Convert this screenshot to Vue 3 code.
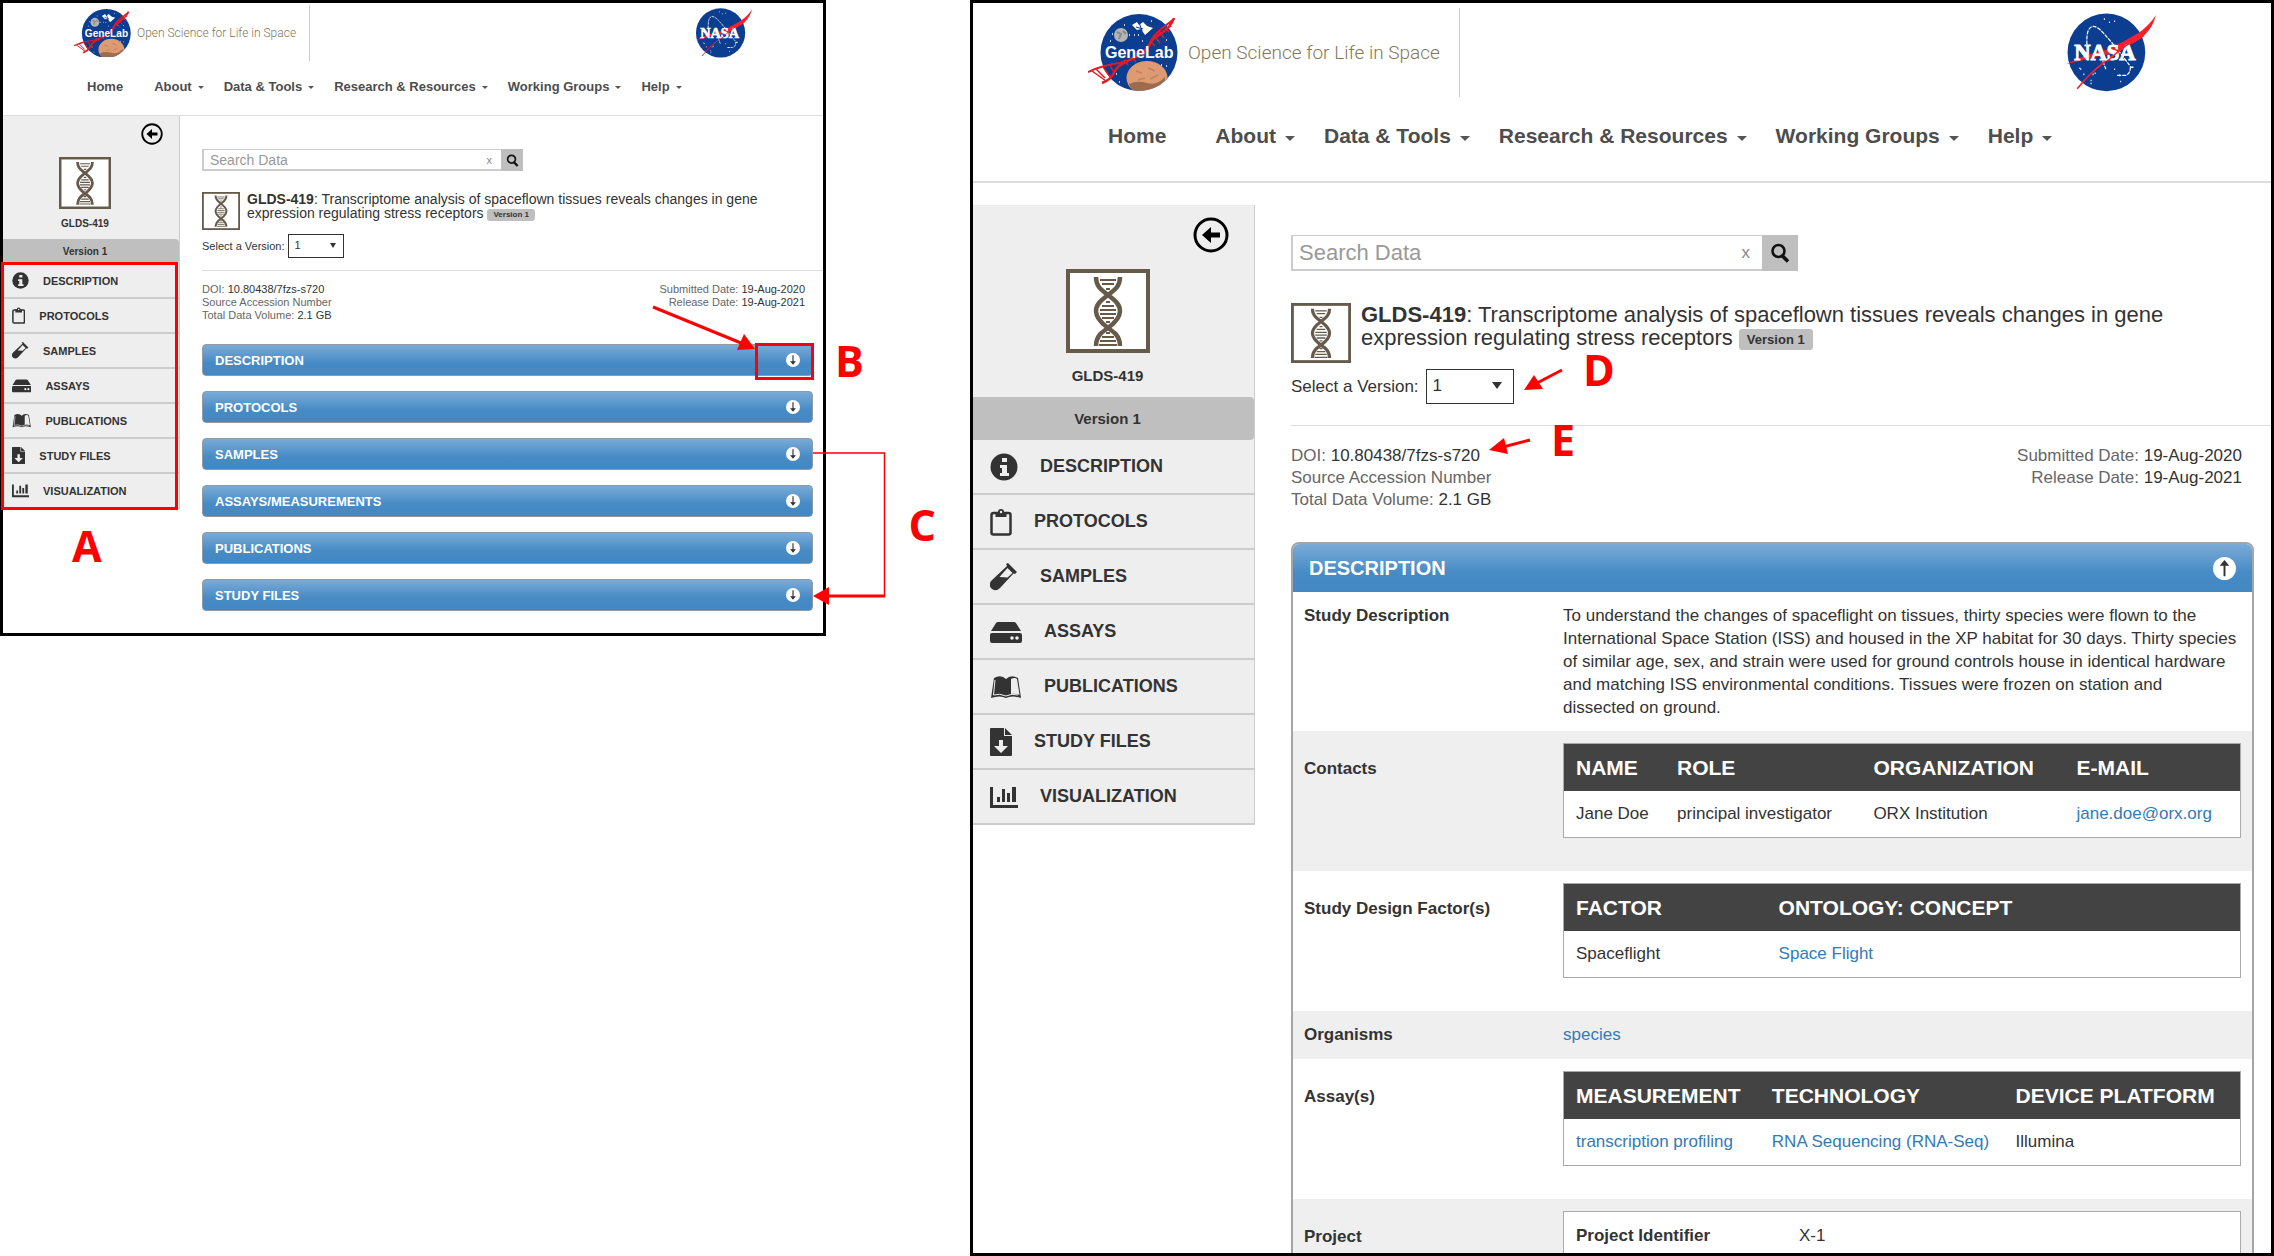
<script setup>
import { ref } from 'vue'

const views = ['compact', 'detail']
const menus = ['Home', 'About', 'Data & Tools', 'Research & Resources', 'Working Groups', 'Help']
const version = ref('1')
const query = ref('')

const sideLinks = [
  { label: 'DESCRIPTION', icon: 'info', w: 28, h: 28 },
  { label: 'PROTOCOLS', icon: 'clipboard', w: 22, h: 28 },
  { label: 'SAMPLES', icon: 'vial', w: 28, h: 28 },
  { label: 'ASSAYS', icon: 'drive', w: 32, h: 28 },
  { label: 'PUBLICATIONS', icon: 'book', w: 32, h: 28 },
  { label: 'STUDY FILES', icon: 'file', w: 22, h: 28 },
  { label: 'VISUALIZATION', icon: 'chart', w: 28, h: 28 },
]

const sections = ['DESCRIPTION', 'PROTOCOLS', 'SAMPLES', 'ASSAYS/MEASUREMENTS', 'PUBLICATIONS', 'STUDY FILES']

const summary = `To understand the changes of spaceflight on tissues, thirty species were flown to the
International Space Station (ISS) and housed in the XP habitat for 30 days. Thirty species
of similar age, sex, and strain were used for ground controls house in identical hardware
and matching ISS environmental conditions. Tissues were frozen on station and
dissected on ground.`

const rows = [
  { label: 'Study Description', text: summary },
  {
    label: 'Contacts',
    kind: 'contacts',
    head: ['NAME', 'ROLE', 'ORGANIZATION', 'E-MAIL'],
    cells: [{ t: 'Jane Doe' }, { t: 'principal investigator' }, { t: 'ORX Institution' }, { t: 'jane.doe@orx.org', link: true }],
  },
  {
    label: 'Study Design Factor(s)',
    kind: 'factors',
    head: ['FACTOR', 'ONTOLOGY: CONCEPT'],
    cells: [{ t: 'Spaceflight' }, { t: 'Space Flight', link: true }],
  },
  { label: 'Organisms', link: 'species' },
  {
    label: 'Assay(s)',
    kind: 'assays',
    head: ['MEASUREMENT', 'TECHNOLOGY', 'DEVICE PLATFORM'],
    cells: [{ t: 'transcription profiling', link: true }, { t: 'RNA Sequencing (RNA-Seq)', link: true }, { t: 'Illumina' }],
  },
  { label: 'Project', kind: 'project', cells: [{ t: 'Project Identifier', strong: true }, { t: 'X-1' }] },
]
</script>

<template>
  <div class="board">
    <article v-for="view in views" :key="view" class="panel" :class="view">
      <header class="site-header">
        <div class="brand-row">
          <a class="brand" href="#">
            <svg class="genelab" viewBox="0 0 90 77" role="img" aria-label="GeneLab">
              <defs>
                <clipPath :id="view + '-disc'"><circle cx="51" cy="38.5" r="38.5" /></clipPath>
              </defs>
              <circle cx="51" cy="38.5" r="38.5" fill="#0b3d91" />
              <g :clip-path="`url(#${view}-disc)`">
                <ellipse cx="59" cy="64" rx="20.5" ry="17" fill="#dd9a73" />
                <path d="M41 70q8-4 18-1t18-6v10q-8 7-18 7t-16-5z" fill="#9c6c4d" />
                <path d="M48 57l6 2M60 54l7 3M50 66l7-2M62 65l8-4" stroke="#c08560" stroke-width="1.5" />
              </g>
              <circle cx="33" cy="21" r="7" fill="#b4b4b4" />
              <path d="M29 18l4 2-2 5M35 17l3 3" stroke="#8b8b8b" stroke-width="2" fill="none" />
              <path d="M44 11l5-3 2 3 4-3 4 4 6 2-8 7-4-6-4 1z" fill="#fff" />
              <path d="M48 13l7 2M51 8l3 9" stroke="#0b3d91" stroke-width="1" />
              <path d="M41 21h1m4 0h1m3 0h1m3 6h1M22 27h1m46-1h1m8 0h1M24 20h1m11-9h1m36 40h1m4 1h1M28 60h1m2 8h1M63 7h1" stroke="#fff" stroke-width="1.5" />
              <g fill="none" stroke="#e31b23">
                <path d="M86 4C82 18 66 20 61 31C53 46 32 46 27 57Q23 66 14 69" stroke-width="2.5" />
                <path d="M86 5C80 10 76 12 70 18Q63 24 62 31C52 43 42 47 32 49Q15 51 0 58" stroke-width="2" />
                <path d="M66 21l6 8M71 17l5 7M76 12l5 6M62 27l5 5M81 9l2 4M43 43l5 5M36 46l4 5M22 51l4 8M15 53l8 11M8 55l9 9M4 57l14 10" stroke-width="1.5" />
              </g>
              <text x="17" y="44" class="genelab-word">GeneLab</text>
            </svg>
            <span class="tagline">Open Science for Life in Space</span>
          </a>
          <svg class="nasa" viewBox="0 0 88 77" role="img" aria-label="NASA">
            <circle cx="39.5" cy="38.5" r="38" fill="#0b3d91" />
            <path d="M21 36C18 12 26 8 36 19Q48 32 62 51M36 47l3 8M50 61h8q5-1 5-9" fill="none" stroke="#fff" stroke-width="1.2" stroke-dasharray="4 1" />
            <path d="M37 6h1m4 3h1m4-1h1M24 66h1m-1 3h1M14 55h1m2 5h1m10-1h1m18-4h1m4 6h1m0 6h1m9-14h3M13 54h1m12 6h1" stroke="#fff" stroke-width="1.5" />
            <path d="M88 2C84 18 73 28 57 33L47 39 29 43 0 50 20 41 40 36Q55 29 70 20Q81 13 88 2z" fill="#fc1f2a" />
            <path d="M76 22C62 30 30 50 11 74" fill="none" stroke="#fc1f2a" stroke-width="1.5" />
            <text x="8" y="46" class="nasa-word">NASA</text>
            <path d="M70 24C55 34 46 41 41 47" fill="none" stroke="#fc1f2a" stroke-width="1.5" />
          </svg>
        </div>
        <nav class="menu" aria-label="Main">
          <a v-for="(m, i) in menus" :key="m" href="#">{{ m }}<i v-if="i" class="caret"></i></a>
        </nav>
      </header>

      <div class="body">
        <aside class="sidebar">
          <button class="back" type="button" aria-label="Collapse menu">
            <svg viewBox="0 0 36 36"><circle cx="18" cy="18" r="16" fill="none" stroke="#000" stroke-width="3" /><path d="M9 18l9-8v5.5h9v5h-9V26z" fill="#000" /></svg>
          </button>
          <svg class="dna" viewBox="0 0 84 84" aria-hidden="true">
            <rect x="2" y="2" width="80" height="80" fill="#fff" stroke="#665a4b" stroke-width="4" />
            <path d="M30 8C30 18 36 21 42 26C50 32 54 36 54 42S50 53 42 59C36 63 30 67 30 77M54 8C54 18 48 21 42 26C34 32 30 36 30 42S34 53 42 59C48 63 54 67 54 77" fill="none" stroke="#665a4b" stroke-width="4.5" />
            <path d="M34 11h16M36 15h12M40 20h4M40 33h4M36 37h12M34 41h16M34 45h16M36 49h12M40 53h4M40 64h4M36 68h12M34 72h16M33 76h18" stroke="#665a4b" stroke-width="1.8" />
          </svg>
          <strong class="dataset-id">GLDS-419</strong>
          <div class="side-version">Version 1</div>
          <nav class="side-nav" aria-label="Study sections">
            <a v-for="l in sideLinks" :key="l.label" href="#">
              <svg class="side-icon" :viewBox="`0 0 ${l.w} ${l.h}`" aria-hidden="true">
                <template v-if="l.icon === 'info'">
                  <circle cx="14" cy="14" r="13.5" />
                  <path d="M12 5h5v4h-5zM10 12h7v8h2v3h-9v-3h2v-5h-2z" fill="#eee" />
                </template>
                <template v-else-if="l.icon === 'clipboard'">
                  <rect x="1.5" y="5" width="19" height="21.5" rx="2" fill="none" stroke="#333" stroke-width="2.5" />
                  <path d="M5.500 4H8a3 3 0 0 1 6 0h2.500v5h-11z" /><circle cx="11" cy="4" r="1.2" fill="#eee" />
                </template>
                <template v-else-if="l.icon === 'vial'">
                  <path d="M16 1l2-1 9 9-2 2-1.500-.5L10 25q-4 4-8 1t-1-8L17 3z" /><path d="M17.500 5l5 5-5 4.500-8-.5z" fill="#eee" />
                </template>
                <template v-else-if="l.icon === 'drive'">
                  <path d="M8 4h16q1 0 2 1l5 8H1l5-8q1-1 2-1zM2 15h28q2 0 2 2v6q0 2-2 2H2q-2 0-2-2v-6q0-2 2-2z" />
                  <circle cx="22" cy="20" r="1.8" fill="#eee" /><circle cx="27" cy="20" r="1.8" fill="#eee" />
                </template>
                <template v-else-if="l.icon === 'book'">
                  <path d="M4 5q7-4 12 1 5-5 12-1l3 20q-9-3-15 0-6-3-15 0z" />
                  <path d="M21 6q4-2 6 0l2.500 16q-4-2-8.500-1z" fill="#eee" />
                  <path d="M5 7L3.500 22q6-2 12.500 1 6-3 12-1" fill="none" stroke="#eee" stroke-width="1" />
                </template>
                <template v-else-if="l.icon === 'file'">
                  <path d="M1 0h13v8h8v19q0 1-1 1H1q-1 0-1-1V1q0-1 1-1zM15 0l7 7h-7z" />
                  <path d="M9 12h4v6h5l-7 7-7-7h5z" fill="#eee" />
                </template>
                <template v-else>
                  <path d="M0 4h3v18h25v3H0zM7 14h3v5H7zM12 6h3v13h-3zM17 10h3v9h-3zM22 4h4v15h-4z" />
                </template>
              </svg>
              {{ l.label }}
            </a>
            <div v-if="view === 'compact'" class="mark-box mark-nav"></div>
          </nav>
        </aside>

        <main class="content">
          <form class="search" @submit.prevent>
            <input v-model="query" type="text" placeholder="Search Data" aria-label="Search Data" />
            <button class="clear" type="button" aria-label="Clear search" @click="query = ''">x</button>
            <button class="go" type="submit" aria-label="Search">
              <svg viewBox="0 0 20 20"><circle cx="8.5" cy="8" r="6" fill="none" stroke="#111" stroke-width="2.6" /><path d="M12 12.500l6 6" stroke="#111" stroke-width="3.6" /></svg>
            </button>
          </form>

          <div class="title-row">
            <svg class="dna-small" viewBox="0 0 84 84" aria-hidden="true">
              <rect x="2" y="2" width="80" height="80" fill="#fff" stroke="#665a4b" stroke-width="4" />
              <path d="M30 8C30 18 36 21 42 26C50 32 54 36 54 42S50 53 42 59C36 63 30 67 30 77M54 8C54 18 48 21 42 26C34 32 30 36 30 42S34 53 42 59C48 63 54 67 54 77" fill="none" stroke="#665a4b" stroke-width="4.5" />
              <path d="M34 11h16M36 15h12M40 20h4M40 33h4M36 37h12M34 41h16M34 45h16M36 49h12M40 53h4M40 64h4M36 68h12M34 72h16M33 76h18" stroke="#665a4b" stroke-width="1.8" />
            </svg>
            <h1><b>GLDS-419</b>: Transcriptome analysis of spaceflown tissues reveals changes in gene expression regulating stress receptors <span class="badge">Version 1</span></h1>
          </div>

          <div class="version-row">
            <label :for="view + '-version'">Select a Version:</label>
            <div class="select-wrap">
              <select :id="view + '-version'" v-model="version"><option>1</option></select>
              <i class="select-arrow"></i>
            </div>
          </div>

          <div class="meta">
            <div>
              <p>DOI: <b>10.80438/7fzs-s720</b></p>
              <p>Source Accession Number</p>
              <p>Total Data Volume: <b>2.1 GB</b></p>
            </div>
            <div class="dates">
              <p>Submitted Date: <b>19-Aug-2020</b></p>
              <p>Release Date: <b>19-Aug-2021</b></p>
            </div>
          </div>

          <div v-if="view === 'compact'" class="accordion">
            <button v-for="(s, i) in sections" :key="s" class="bar" type="button">
              {{ s }}
              <svg class="toggle" viewBox="0 0 24 24"><circle cx="12" cy="12" r="12" fill="#fff" /><path d="M11 4h2v10h4l-5 6-5-6h4z" fill="#333" /></svg>
              <span v-if="i === 0" class="mark-box mark-toggle"></span>
            </button>
          </div>

          <section v-else class="card">
            <button class="bar open" type="button">
              DESCRIPTION
              <svg class="toggle" viewBox="0 0 24 24"><circle cx="12" cy="12" r="12" fill="#fff" /><path d="M11 20h2V9h4l-5-6-5 6h4z" fill="#333" /></svg>
            </button>
            <div v-for="r in rows" :key="r.label" class="row" :class="{ boxed: r.kind }">
              <h2>{{ r.label }}</h2>
              <p v-if="r.text" class="summary">{{ r.text }}</p>
              <p v-else-if="r.link"><a href="#">{{ r.link }}</a></p>
              <table v-else :class="r.kind">
                <thead v-if="r.head">
                  <tr><th v-for="h in r.head" :key="h" scope="col">{{ h }}</th></tr>
                </thead>
                <tbody>
                  <tr>
                    <td v-for="c in r.cells" :key="c.t">
                      <a v-if="c.link" href="#">{{ c.t }}</a>
                      <b v-else-if="c.strong">{{ c.t }}</b>
                      <template v-else>{{ c.t }}</template>
                    </td>
                  </tr>
                </tbody>
              </table>
            </div>
          </section>
        </main>
      </div>

      <template v-if="view === 'compact'">
        <span class="letter letter-a">A</span>
        <svg class="marks marks-compact" viewBox="0 0 290 320" aria-hidden="true">
          <path d="M3 7L91 43" stroke-width="3" />
          <path class="head" d="M105 49l-18 1 7-16z" />
          <path d="M163 153h71.500v143" stroke-width="1.5" />
          <path d="M177 296h58" stroke-width="3" />
          <path class="head" d="M163 296l16-9v18z" />
        </svg>
        <span class="letter letter-b">B</span>
        <span class="letter letter-c">C</span>
      </template>
      <template v-else>
        <svg class="marks marks-detail" viewBox="0 0 120 120" aria-hidden="true">
          <path d="M89 27L64 40" stroke-width="3" />
          <path class="head" d="M51 47l10-15 9 14z" />
          <path d="M57 97L30 104" stroke-width="3" />
          <path class="head" d="M16 107l15-12 4 16z" />
        </svg>
        <span class="letter letter-d">D</span>
        <span class="letter letter-e">E</span>
      </template>
    </article>
  </div>
</template>

<style>
body {
  margin: 0;
  background: #fff;
}
</style>

<style scoped>
* {
  box-sizing: border-box;
}

.board {
  display: grid;
  grid-template-columns: 826fr 1304fr;
  column-gap: 6.333%;
  align-items: start;
  font-family: "Liberation Sans", Arial, sans-serif;
  color: #333;
}

.panel {
  position: relative;
  min-width: 0;
  border: 3px solid #000;
  background: #fff;
}

.compact {
  --edge: 71px;
  --brand-w: 307px;
  --brand-h: 56px;
  --brand-top: 2px;
  --brand-bottom: 5px;
  --logo-w: 57px;
  --logo-gap: 6px;
  --tag: 12px;
  --nav-text: 13px;
  --nav-h: 40px;
  --nav-bottom: 9px;
  --nav-left: 84px;
  --nav-gap: 20px;
  --home-gap: 11px;
  --caret: 3px;
  --caret-gap: 6px;
  --rule: 1px;
  --side-w: 177px;
  --side-top: 0px;
  --back: 22px;
  --back-top: 7px;
  --back-right: 16px;
  --dna: 52px;
  --dna-top: 12px;
  --id-text: 10px;
  --id-h: 18px;
  --id-top: 6px;
  --id-bottom: 6px;
  --ver-h: 25px;
  --link-h: 35px;
  --link-text: 11px;
  --link-left: 9px;
  --link-gap: 14px;
  --icon: 17px;
  --main-top: 33px;
  --main-left: 22px;
  --main-right: 10px;
  --search-w: 321px;
  --search-h: 22px;
  --search-text: 14px;
  --clear: 9px;
  --glass: 13px;
  --title-top: 21px;
  --title-text: 14px;
  --title-lh: 14px;
  --title-gap: 7px;
  --mini: 38px;
  --badge-text: 8px;
  --badge-h: 12px;
  --badge-pad: 6px;
  --text: 11px;
  --ver-top: 4px;
  --ver-gap: 3px;
  --sel-w: 56px;
  --sel-h: 24px;
  --hr-top: 12px;
  --meta-top: 12px;
  --meta-lh: 13px;
  --meta-bottom: 22px;
  --dates-right: 8px;
  --bar-h: 32px;
  --bar-text: 13px;
  --bar-pad: 12px;
  --toggle: 14px;
}

.detail {
  --edge: 115px;
  --brand-w: 487px;
  --brand-h: 89px;
  --brand-top: 5px;
  --brand-bottom: 4px;
  --logo-w: 90px;
  --logo-gap: 10px;
  --tag: 19px;
  --nav-text: 21px;
  --nav-h: 70px;
  --nav-bottom: 10px;
  --nav-left: 135px;
  --nav-gap: 29px;
  --home-gap: 20px;
  --caret: 5px;
  --caret-gap: 9px;
  --rule: 2px;
  --side-w: 282px;
  --side-top: 22px;
  --back: 36px;
  --back-top: 12px;
  --back-right: 25px;
  --dna: 84px;
  --dna-top: 16px;
  --id-text: 15px;
  --id-h: 26px;
  --id-top: 10px;
  --id-bottom: 8px;
  --ver-h: 43px;
  --link-h: 55px;
  --link-text: 18px;
  --link-left: 17px;
  --link-gap: 22px;
  --icon: 28px;
  --main-top: 52px;
  --main-left: 36px;
  --main-right: 17px;
  --search-w: 507px;
  --search-h: 36px;
  --search-text: 22px;
  --clear: 12px;
  --glass: 20px;
  --title-top: 32px;
  --title-text: 22px;
  --title-lh: 23px;
  --title-gap: 10px;
  --mini: 60px;
  --badge-text: 13px;
  --badge-h: 21px;
  --badge-pad: 8px;
  --text: 17px;
  --ver-top: 6px;
  --ver-gap: 7px;
  --sel-w: 88px;
  --sel-h: 35px;
  --hr-top: 21px;
  --meta-top: 19px;
  --meta-lh: 22px;
  --meta-bottom: 31px;
  --dates-right: 12px;
  --bar-h: 50px;
  --bar-text: 20px;
  --bar-pad: 16px;
  --toggle: 23px;
  height: 100vh;
  overflow: hidden;
}

a {
  color: #337ab7;
  text-decoration: none;
}

button {
  padding: 0;
  border: 0;
  background: none;
  font: inherit;
  color: inherit;
  cursor: pointer;
}

svg {
  display: block;
}

p {
  margin: 0;
}

/* Site header */
.site-header {
  border-bottom: var(--rule) solid #ddd;
}

.brand-row {
  display: flex;
  justify-content: space-between;
  align-items: center;
  padding: var(--brand-top) var(--edge) var(--brand-bottom) 0;
}

.brand {
  display: flex;
  align-items: center;
  gap: var(--logo-gap);
  width: var(--brand-w);
  height: var(--brand-h);
  padding-left: var(--edge);
  border-right: 1px solid #ccc;
}

.genelab,
.nasa {
  flex: none;
  width: var(--logo-w);
}

.genelab-word {
  font: bold 16px "Liberation Sans", Arial, sans-serif;
  fill: #fff;
}

.nasa-word {
  font: bold 22px "Liberation Serif", serif;
  fill: #fff;
  stroke: #fff;
  stroke-width: 1px;
}

.tagline {
  font: 300 var(--tag) Roboto, sans-serif;
  color: #857656;
  white-space: nowrap;
}

.menu {
  display: flex;
  align-items: center;
  gap: var(--nav-gap);
  height: var(--nav-h);
  margin-bottom: var(--nav-bottom);
  padding-left: var(--nav-left);
}

.menu a {
  display: flex;
  align-items: center;
  gap: var(--caret-gap);
  font-size: var(--nav-text);
  font-weight: bold;
  color: #4d4d4d;
  white-space: nowrap;
}

.menu a:first-child {
  margin-right: var(--home-gap);
}

.caret {
  margin-top: var(--caret);
  border: var(--caret) solid transparent;
  border-top-color: #555;
  border-bottom: 0;
}

/* Sidebar */
.body {
  display: flex;
  align-items: flex-start;
}

.sidebar {
  display: flex;
  flex: none;
  flex-direction: column;
  align-items: center;
  width: var(--side-w);
  margin-top: var(--side-top);
  border-right: 1px solid #ccc;
  background: #eee;
}

.back {
  align-self: flex-end;
  width: var(--back);
  margin: var(--back-top) var(--back-right) 0 0;
}

.dna {
  width: var(--dna);
  margin: var(--dna-top) 12px var(--id-top) 0;
}

.dataset-id {
  margin: 0 12px var(--id-bottom) 0;
  font-size: var(--id-text);
  line-height: var(--id-h);
}

.side-version {
  width: 100%;
  padding-right: 12px;
  border-radius: 0 4px 4px 0;
  background: #bfbfbf;
  font-size: var(--id-text);
  font-weight: bold;
  line-height: var(--ver-h);
  text-align: center;
}

.side-nav {
  position: relative;
  width: 100%;
}

.side-nav a {
  display: flex;
  align-items: center;
  gap: var(--link-gap);
  height: var(--link-h);
  padding-left: var(--link-left);
  border-bottom: 2px solid #ccc;
  font-size: var(--link-text);
  font-weight: bold;
  color: #333;
}

.side-icon {
  flex: none;
  height: var(--icon);
  fill: #333;
}

/* Main column */
.content {
  flex: 1;
  min-width: 0;
  padding: var(--main-top) var(--main-right) 22px var(--main-left);
  font-size: var(--text);
}

.search {
  display: flex;
  position: relative;
  width: var(--search-w);
  height: var(--search-h);
}

.search input {
  flex: 1;
  min-width: 0;
  padding: 0 6px;
  border: 1px solid #ccc;
  border-width: 1px 0 2px 2px;
  outline: 0;
  font: var(--search-text) "Liberation Sans", Arial, sans-serif;
}

.search input::placeholder {
  color: #999;
  opacity: 1;
}

.clear {
  position: absolute;
  top: 0;
  right: calc(var(--search-h) + var(--clear));
  height: 100%;
  color: #888;
}

.go {
  display: grid;
  place-items: center;
  width: var(--search-h);
  background: #bfbfbf;
}

.go svg {
  width: var(--glass);
}

.title-row {
  display: flex;
  align-items: flex-start;
  gap: var(--title-gap);
  margin-top: var(--title-top);
}

.dna-small {
  flex: none;
  width: var(--mini);
}

h1 {
  margin: 0;
  font-size: var(--title-text);
  font-weight: normal;
  line-height: var(--title-lh);
}

.badge {
  display: inline-block;
  height: var(--badge-h);
  padding: 0 var(--badge-pad);
  border-radius: 3px;
  background: #bfbfbf;
  font-size: var(--badge-text);
  font-weight: bold;
  line-height: var(--badge-h);
  vertical-align: text-bottom;
}

.version-row {
  display: flex;
  align-items: center;
  gap: var(--ver-gap);
  margin-top: var(--ver-top);
}

.select-wrap {
  position: relative;
}

select {
  display: block;
  width: var(--sel-w);
  height: var(--sel-h);
  padding: 0 6px 3px;
  border: 1px solid #333;
  border-radius: 0;
  background: #fff;
  appearance: none;
  font: inherit;
  color: #333;
}

.select-arrow {
  position: absolute;
  top: 36%;
  right: 13%;
  border: var(--caret) solid transparent;
  border-top: calc(var(--caret) + 2px) solid #333;
  border-bottom: 0;
  pointer-events: none;
}

.meta {
  display: flex;
  justify-content: space-between;
  margin: var(--hr-top) calc(0px - var(--main-right)) var(--meta-bottom) 0;
  padding: var(--meta-top) calc(var(--main-right) + var(--dates-right)) 0 0;
  border-top: 1px solid #ddd;
  color: #666;
  line-height: var(--meta-lh);
}

.meta b {
  font-weight: normal;
  color: #333;
}

.dates {
  text-align: right;
}

.accordion {
  display: flex;
  flex-direction: column;
  gap: 15px;
}

.bar {
  display: flex;
  position: relative;
  justify-content: space-between;
  align-items: center;
  width: 100%;
  height: var(--bar-h);
  padding: 0 var(--bar-pad);
  border: 1px solid #8f9aa5;
  border-radius: 4px;
  background: linear-gradient(#7aabd7, #468bc5 60%, #4388c3);
  font-size: var(--bar-text);
  font-weight: bold;
  color: #fff;
}

.toggle {
  width: var(--toggle);
}

/* Expanded card */
.card {
  border: 2px solid #a5a5a5;
  border-radius: 8px;
  overflow: hidden;
}

.bar.open {
  height: 48px;
  border: 0;
  border-radius: 0;
}

.row {
  display: grid;
  grid-template-columns: 259px 1fr;
  align-items: start;
  min-height: 48px;
  padding: 12px 11px;
  line-height: 23px;
}

.row:nth-child(odd) {
  background: #efefef;
}

.row.boxed {
  padding-bottom: 33px;
}

h2 {
  margin: 0;
  font-size: 17px;
  line-height: 23px;
}

.boxed h2 {
  margin-top: 14px;
}

.summary {
  white-space: pre-line;
}

table {
  width: 100%;
  table-layout: fixed;
  border: 1px solid #aaa;
  border-collapse: collapse;
  background: #fff;
}

th,
td {
  height: 47px;
  padding: 0 0 0 12px;
  text-align: left;
  white-space: nowrap;
}

th {
  background: #434343;
  font-size: 21px;
  color: #fff;
}

.contacts th:nth-child(1) {
  width: 15%;
}

.contacts th:nth-child(2) {
  width: 29%;
}

.contacts th:nth-child(3) {
  width: 30%;
}

.factors th:first-child {
  width: 30%;
}

.assays th:nth-child(1) {
  width: 29%;
}

.assays th:nth-child(2) {
  width: 36%;
}

.project td:first-child {
  width: 33%;
}

.project td {
  height: 80px;
  padding-top: 12px;
  vertical-align: top;
}

/* Callouts */
.mark-box {
  position: absolute;
  border: 3px solid #f00;
  pointer-events: none;
}

.mark-nav {
  inset: -2px 1px -1px -2px;
}

.mark-toggle {
  top: -2px;
  right: -2px;
  bottom: -5px;
  width: 59px;
}

.marks {
  position: absolute;
  fill: none;
  stroke: #f00;
}

.head {
  fill: #f00;
  stroke: none;
}

.marks-compact {
  top: 297px;
  right: -117px;
  width: 290px;
}

.marks-detail {
  top: 340px;
  left: 500px;
  width: 120px;
}

.letter {
  position: absolute;
  font: bold 43px/44px "Open Sans", Lato, sans-serif;
  color: #f00;
}

.letter-a {
  top: 521px;
  left: 69px;
}

.letter-b {
  top: 336px;
  right: -41px;
}

.letter-c {
  top: 500px;
  right: -113px;
}

.letter-d {
  top: 345px;
  left: 610px;
}

.letter-e {
  top: 415px;
  left: 578px;
}
</style>
